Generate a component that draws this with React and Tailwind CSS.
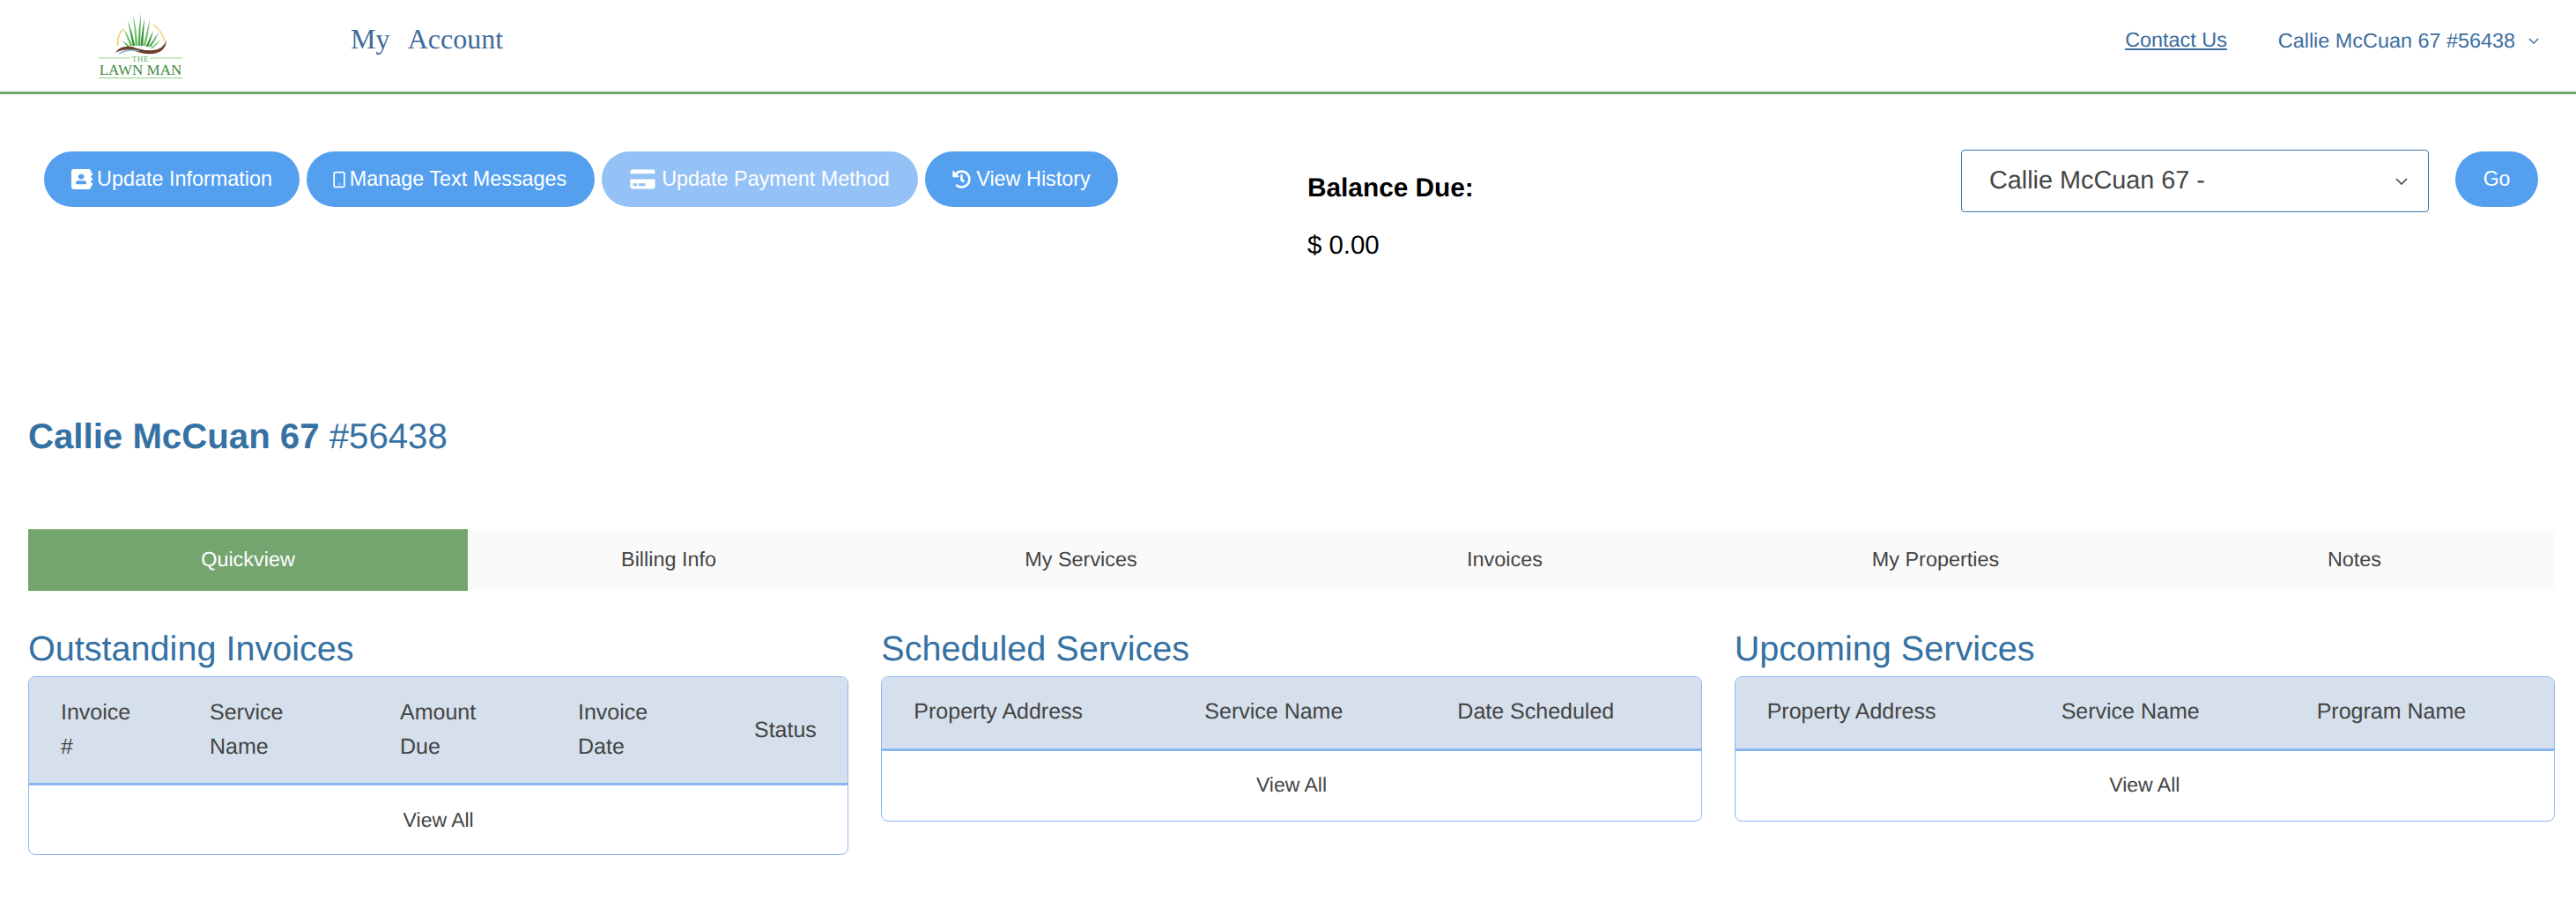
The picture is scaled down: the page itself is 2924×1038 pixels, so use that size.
import React from "react";
import { FaAddressBook, FaCreditCard, FaHistory } from "react-icons/fa";
import { Smartphone } from "lucide-react";

// base x, base y, control x, control y, tip x, tip y, colour
const blades = [
  [34, 38, 31, 34, 26, 31, "#4da64f"],
  [37, 37, 33, 26, 28, 17, "#5fbf55"],
  [40, 37, 37, 22, 33, 8, "#3f8f45"],
  [43, 37, 42, 18, 39, 2, "#6cc862"],
  [46, 37, 46, 18, 48, 0, "#4fae4f"],
  [49, 37, 50, 20, 52, 6, "#3f8f45"],
  [52, 37, 56, 20, 58, 7, "#6cc862"],
  [55, 38, 59, 28, 62, 20, "#3f8f45"],
  [58, 38, 64, 30, 68, 21, "#4da64f"],
  [60, 40, 66, 35, 71, 29, "#6cc862"],
];

function Logo() {
  return (
    <svg viewBox="0 0 95 75" className="w-[95px] h-[75px] overflow-visible">
      {blades.map(([bx, by, cx, cy, tx, ty, fill], i) => (
        <path
          key={i}
          d={`M${bx - 1.4} ${by} Q${cx - 1.2} ${cy} ${tx} ${ty} Q${cx + 1.2} ${cy} ${bx + 1.4} ${by}Z`}
          fill={fill}
        />
      ))}
      <path d="M28 18 Q20 26 22 37" fill="none" stroke="#f5c65f" strokeWidth="1.4" />
      <path d="M62 13 Q72 20 75 32" fill="none" stroke="#f5c65f" strokeWidth="1.4" />
      <path d="M19 45 Q24 36 38 38 Q50 43 62 42 Q73 41 77 31 Q76 44 62 46 Q50 47 38 42 Q27 40 19 45Z" fill="#6b3f2a" />
      <path d="M23 46 Q33 40 46 43" fill="none" stroke="#7fb2dc" strokeWidth="1.4" />
      <path d="M0 51H36M58 51H95" stroke="#8fd67f" strokeWidth="1" />
      <text x="47.5" y="55" textAnchor="middle" fontSize="9" letterSpacing="0.6" fill="#5faf55" fontFamily="'Liberation Serif', serif">THE</text>
      <text x="47.5" y="69.5" textAnchor="middle" fontSize="17" fill="#3f8a3e" fontFamily="'Liberation Serif', serif">LAWN MAN</text>
      <path d="M0 73.5H95" stroke="#8fd67f" strokeWidth="1.2" />
    </svg>
  );
}

function Chevron({ className }) {
  return (
    <svg viewBox="0 0 14 8" className={className} fill="none" stroke="currentColor" strokeWidth="1.6">
      <path d="M1 1l6 6 6-6" />
    </svg>
  );
}

function ActionButton({ icon, label, disabled, size }) {
  return (
    <button className={`flex items-center justify-center ${size} h-[63px] rounded-[32px] text-white text-[23.4px] ${disabled ? "bg-[#94c1f6]" : "bg-[#54a0ef]"}`}>
      {icon}
      <span>{label}</span>
    </button>
  );
}

function InfoCard({ title, cols, heads, tall }) {
  return (
    <div>
      <h3 className="text-[39.6px] leading-[46px] text-[#3571a3] h-[54px] mt-[2px]">{title}</h3>
      <div className="border border-[#8ab6f2] rounded-[8px] overflow-hidden">
        <div className={`grid ${cols} items-center pl-[36px] bg-[#d5e0ec] border-b-[3px] border-[#8ab6f2] text-[25px] text-[#444] ${tall ? "h-[123px] leading-[39px]" : "h-[84px] pb-[2px]"}`}>
          {heads.map((h, i) => (
            <div key={i} className="whitespace-pre-line">{h}</div>
          ))}
        </div>
        <div className={`flex items-center justify-center text-[23px] text-[#444] ${tall ? "h-[78px]" : "h-[79px] pb-[2px]"}`}>View All</div>
      </div>
    </div>
  );
}

const tabs = ["Quickview", "Billing Info", "My Services", "Invoices", "My Properties", "Notes"];

export default function App() {
  return (
    <div className="w-[2924px] h-[1038px] bg-white overflow-hidden font-['Liberation_Sans',Arial,sans-serif] [text-rendering:geometricPrecision]">
      {/* Top bar */}
      <header className="h-[107px] border-b-[3px] border-[#75a56f] flex items-center pl-[112px] pr-[42px]">
        <Logo />
        <div className="ml-[191px] font-['Liberation_Serif',serif] text-[32px] text-[#3f6a99] [word-spacing:3px] whitespace-pre -mt-[16px]">My  Account</div>
        <a className="ml-auto text-[23.4px] text-[#3c6d9e] underline -mt-[13px]">Contact Us</a>
        <div className="ml-[58px] flex items-center gap-[15px] text-[23.4px] text-[#3c6d9e] -mt-[10px]">
          Callie McCuan 67 #56438
          <Chevron className="w-[12px] h-[7px]" />
        </div>
      </header>

      {/* Actions */}
      <div className="flex items-start pl-[50px] pt-[63px] h-[373px]">
        <div className="w-[1434px] flex gap-[8px] pt-[2px]">
          <ActionButton label="Update Information" size="w-[290px] gap-[5px]" icon={<FaAddressBook className="w-[24px] h-[23px]" preserveAspectRatio="none" />} />
          <ActionButton label="Manage Text Messages" size="w-[327px] gap-[2px]" icon={<Smartphone className="w-[20px] h-[20px] -ml-[5px]" strokeWidth={2} />} />
          <ActionButton label="Update Payment Method" size="w-[359px] gap-[7px]" disabled icon={<FaCreditCard className="w-[29px] h-[25px]" />} />
          <ActionButton label="View History" size="w-[219px] gap-[6px]" icon={<FaHistory className="w-[21px] h-[21px]" />} />
        </div>
        <div className="w-[742px] text-black pt-[26px]">
          <div className="font-bold text-[29.8px] leading-[36px]">Balance Due:</div>
          <div className="mt-[29px] text-[29.4px] leading-[36px]">$ 0.00</div>
        </div>
        <div className="w-[531px] h-[71px] border border-[#3a76ab] rounded-[4px] flex items-center justify-between pl-[31px] pr-[23px] text-[28.8px] text-[#444]">
          Callie McCuan 67 -
          <Chevron className="w-[14px] h-[8px]" />
        </div>
        <button className="ml-[30px] mt-[2px] w-[94px] h-[63px] rounded-[32px] bg-[#54a0ef] text-white text-[23px]">Go</button>
      </div>

      <div className="pl-[32px] pr-[24px] -mt-[7px]">
        <h1 className="text-[40.2px] leading-[46px] text-[#3571a3]">
          <b>Callie McCuan 67</b> #56438
        </h1>

        {/* Tabs */}
        <div className="mt-[82px] grid grid-cols-[499px_456px_480px_482px_496px_455px] h-[70px] bg-[#fafafa] text-[23.4px] text-[#444]">
          {tabs.map((t, i) => (
            <div key={t} className={`flex items-center justify-center ${i === 0 ? "bg-[#75a56f] text-white" : ""}`}>{t}</div>
          ))}
        </div>

        {/* Cards */}
        <div className="mt-[41px] grid grid-cols-3 gap-[37px] items-start">
          <InfoCard
            title="Outstanding Invoices"
            tall
            cols="grid-cols-[169px_216px_202px_200px_1fr]"
            heads={["Invoice\n#", "Service\nName", "Amount\nDue", "Invoice\nDate", "Status"]}
          />
          <InfoCard
            title="Scheduled Services"
            cols="grid-cols-[330px_287px_1fr]"
            heads={["Property Address", "Service Name", "Date Scheduled"]}
          />
          <InfoCard
            title="Upcoming Services"
            cols="grid-cols-[334px_290px_1fr]"
            heads={["Property Address", "Service Name", "Program Name"]}
          />
        </div>
      </div>
    </div>
  );
}
